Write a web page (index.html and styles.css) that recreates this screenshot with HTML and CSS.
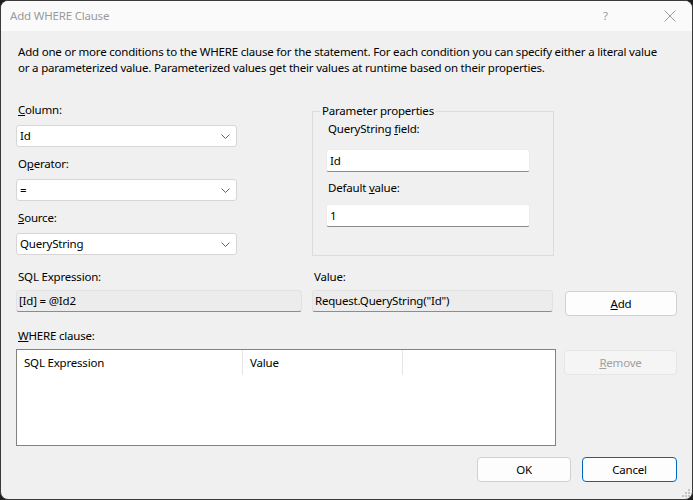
FILE: index.html
```html
<!DOCTYPE html>
<html lang="en">
<head>
<meta charset="utf-8">
<title>Add WHERE Clause</title>
<link rel="stylesheet" href="styles.css">
</head>
<body>
<div class="window">
  <div class="titlebar">
    <span class="title">Add WHERE Clause</span>
    <span class="tb-help">?</span>
    <span class="tb-close">
      <svg width="12" height="12" viewBox="0 0 12 12"><path d="M0.5 0.5 L11.5 11.5 M11.5 0.5 L0.5 11.5" stroke="#9a9a9a" stroke-width="1" fill="none"/></svg>
    </span>
  </div>
  <div class="content">
    <p class="desc">Add one or more conditions to the WHERE clause for the statement. For each condition you can specify either a literal value<br>or a parameterized value. Parameterized values get their values at runtime based on their properties.</p>

    <div class="row-top">
      <div class="left-col">
        <label class="lbl"><u>C</u>olumn:</label>
        <div class="combo"><span>Id</span><svg class="chev" width="9" height="5" viewBox="0 0 9 5"><path d="M0.5 0.5 L4.5 4.5 L8.5 0.5" stroke="#606060" fill="none"/></svg></div>
        <label class="lbl">O<u>p</u>erator:</label>
        <div class="combo"><span>=</span><svg class="chev" width="9" height="5" viewBox="0 0 9 5"><path d="M0.5 0.5 L4.5 4.5 L8.5 0.5" stroke="#606060" fill="none"/></svg></div>
        <label class="lbl"><u>S</u>ource:</label>
        <div class="combo last"><span>QueryString</span><svg class="chev" width="9" height="5" viewBox="0 0 9 5"><path d="M0.5 0.5 L4.5 4.5 L8.5 0.5" stroke="#606060" fill="none"/></svg></div>
      </div>
      <fieldset class="group">
        <legend>Parameter properties</legend>
        <label class="lbl g1">QueryString <u>f</u>ield:</label>
        <div class="textbox">Id</div>
        <label class="lbl g2">Default <u>v</u>alue:</label>
        <div class="textbox">1</div>
      </fieldset>
    </div>

    <div class="row-expr">
      <label class="lbl">SQL Expression:</label>
      <label class="lbl">Value:</label>
      <span></span>
      <div class="readonly">[Id] = @Id2</div>
      <div class="readonly">Request.QueryString("Id")</div>
      <button class="btn add"><u>A</u>dd</button>
    </div>

    <label class="lbl where-lbl"><u>W</u>HERE clause:</label>
    <div class="row-list">
      <div class="listview">
        <div class="lv-header">
          <div class="lv-col c1">SQL Expression</div>
          <div class="lv-col c2">Value</div>
          <div class="lv-col c3"></div>
        </div>
      </div>
      <button class="btn remove" disabled><u>R</u>emove</button>
    </div>

    <div class="footer">
      <button class="btn ok">OK</button>
      <button class="btn cancel">Cancel</button>
    </div>
  </div>
  <svg class="grip" width="10" height="10" viewBox="0 0 10 10">
    <rect x="8" y="2" width="2" height="2" fill="#c4c4c4"/>
    <rect x="5" y="5" width="2" height="2" fill="#c4c4c4"/>
    <rect x="8" y="5" width="2" height="2" fill="#c4c4c4"/>
    <rect x="2" y="8" width="2" height="2" fill="#c4c4c4"/>
    <rect x="5" y="8" width="2" height="2" fill="#c4c4c4"/>
    <rect x="8" y="8" width="2" height="2" fill="#c4c4c4"/>
  </svg>
</div>
</body>
</html>
```
FILE: styles.css
```css
* { box-sizing: border-box; }
html, body { margin: 0; padding: 0; }
body {
  background: #1e1e1e;
  font-family: "Noto Sans", "Open Sans", sans-serif;
  font-size: 11.5px;
  letter-spacing: -0.2px;
  line-height: 16px;
  color: #000;
}
.window {
  position: relative;
  width: 693px;
  height: 500px;
  background: #f0f0f0;
  border: 1px solid #3a3a3a;
  border-radius: 8px;
  overflow: hidden;
  display: flex;
  flex-direction: column;
}
.titlebar {
  height: 30px;
  background: #fafafa;
  display: flex;
  align-items: center;
  padding-left: 9px;
  color: #9a9a9a;
}
.title { flex: 1; }
.tb-help { width: 14px; margin-right: 47px; }
.tb-close { width: 12px; height: 12px; margin-right: 16px; display: flex; }
.content {
  flex: 1;
  padding: 0 15px 0 15px;
  display: flex;
  flex-direction: column;
}
.desc { margin: 13px 0 0 2px; white-space: nowrap; }
.lbl { display: block; padding-left: 2px; }
.row-top {
  display: flex;
  align-items: flex-start;
  margin-top: 26px;
}
.left-col { width: 221px; display: flex; flex-direction: column; }
.left-col .lbl { margin-bottom: 7px; }
.combo {
  height: 22px;
  background: #fff;
  border: 1px solid #d6d6d6;
  border-radius: 3px;
  display: flex;
  align-items: center;
  justify-content: space-between;
  padding: 0 6px 0 3px;
  margin-bottom: 9px;
}
.combo.last { margin-bottom: 0; }
.chev { display: block; }
.group {
  margin: 1px 0 0 75px;
  width: 242px;
  height: 153px;
  border: 1px solid #dcdcdc;
  padding: 0 23px 0 13px;
  min-width: 0;
}
.group legend {
  padding: 0 2px;
  margin-left: -6px;
  line-height: 16px;
}
.group .g1 { margin-top: 2px; }
.group .g2 { margin-top: 8px; }
.textbox {
  height: 23px;
  background: #fff;
  border: 1px solid #ececec;
  border-bottom: 1px solid #8a8a8a;
  border-radius: 3px;
  padding: 0 3px;
  display: flex;
  align-items: center;
  margin-top: 12px;
}
.g2 + .textbox { margin-top: 8px; }
.row-expr {
  margin-top: 13px;
  display: grid;
  grid-template-columns: 286px 241px 112px;
  column-gap: 10px;
  row-gap: 5px;
  align-items: start;
}
.readonly {
  height: 22px;
  background: #ececec;
  border: 1px solid #e2e2e2;
  border-bottom: 1px solid #8c8c8c;
  border-radius: 3px;
  padding: 0 2px;
  display: flex;
  align-items: center;
}
.btn {
  font-family: inherit;
  font-size: inherit;
  letter-spacing: inherit;
  line-height: 16px;
  color: #000;
  height: 25px;
  background: #fdfdfd;
  border: 1px solid #d0d0d0;
  border-radius: 4px;
  padding: 0;
}
.add { margin: 1px 0 0 2px; width: 112px; }
.where-lbl { margin-top: 12px; }
.row-list {
  margin-top: 5px;
  display: flex;
  align-items: flex-start;
}
.listview {
  width: 540px;
  height: 97px;
  background: #fff;
  border: 1px solid #828282;
}
.lv-header { display: flex; height: 25px; }
.lv-col {
  display: flex;
  align-items: center;
  padding-left: 7px;
  border-right: 1px solid #e5e5e5;
}
.c1 { width: 226px; }
.c2 { width: 160px; }
.c3 { width: 0; flex: 0 0 0; border: none; }
.remove {
  width: 113px;
  margin: 1px 0 0 8px;
  background: #f5f5f5;
  border-color: #e6e6e6;
  color: #a0a0a0;
}
.footer {
  margin-top: 11px;
  display: flex;
  justify-content: flex-end;
  gap: 11px;
}
.ok { width: 94px; }
.cancel { width: 95px; border: 1px solid #0067c0; }
.grip { position: absolute; right: 2px; bottom: 2px; }
```
